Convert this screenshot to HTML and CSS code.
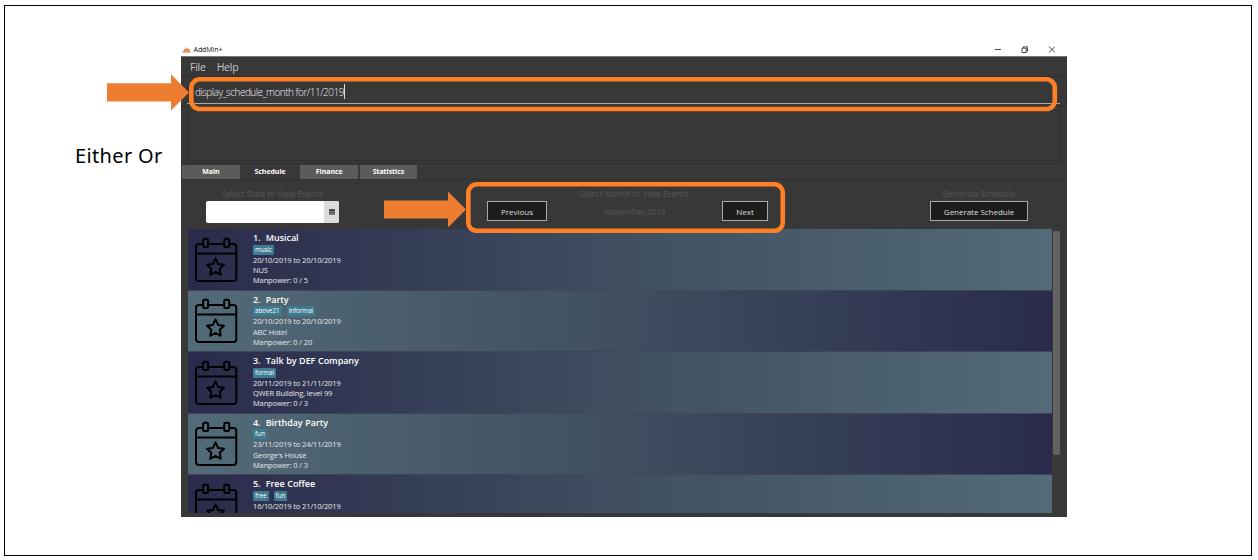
FILE: index.html
```html
<!DOCTYPE html>
<html lang="en">
<head>
<meta charset="utf-8">
<title>AddMin+</title>
<link rel="stylesheet" href="styles.css">
</head>
<body>
<svg class="defs" width="0" height="0">
  <symbol id="calendar" viewBox="0 0 44 46">
    <g fill="none" stroke="#000" stroke-width="2" stroke-linejoin="round">
      <path d="M8.500 7H5Q2 7 2 10V41Q2 44 5 44H39.300Q42.300 44 42.300 41V10Q42.300 7 39.300 7H36M15 7H29.500M2 16.600H42.300"/>
      <rect x="9.100" y="1.700" width="5" height="8.300" rx="1.500"/>
      <rect x="30.200" y="1.700" width="5" height="8.300" rx="1.500"/>
      <path d="M21.500 21.300L24.100 26.900L30 27.700L25.700 31.800L26.800 37.800L21.500 34.900L16.200 37.800L17.300 31.800L13 27.700L18.900 26.900Z"/>
    </g>
  </symbol>
</svg>
<div class="page">
  <aside class="caption"><span>Either Or</span></aside>
  <main class="window">
    <header class="titlebar">
      <svg class="logo" width="9" height="8" viewBox="0 0 9 8"><path d="M1 5.500L2.500 2.500L3.500 3.500L4.500 1L6 3L7 2.500L8.500 5.500Z" fill="#ed8a50"/><path d="M.5 6H8.500" stroke="#c9713f"/></svg>
      <span class="title">AddMin+</span>
      <svg class="controls" width="60" height="9" viewBox="0 0 60 9" fill="none" stroke="#333" stroke-width=".9"><path d="M0 4.500H6M27 3.200H31.200V7.500H27ZM28.200 3V1.900H32.500V6.200H31.300M54 1.500L60 7.500M60 1.500L54 7.500"/></svg>
    </header>
    <nav class="menu"><span class="file">File</span><span class="help">Help</span></nav>
    <section class="command"><div class="field"><span class="typed">display_schedule_month for/11/2019</span><i class="caret"></i></div></section>
    <section class="result"><div class="output"></div></section>
    <nav class="tabs"><span class="tab"><b class="t1">Main</b></span><span class="tab active"><b class="t2">Schedule</b></span><span class="tab"><b class="t3">Finance</b></span><span class="tab"><b class="t4">Statistics</b></span></nav>
    <section class="tools">
      <div class="date"><label>Select Date to View Events</label>
        <div class="picker"><span class="pick"><svg width="6" height="6" viewBox="0 0 6 6"><path d="M0 .5H6V6H0Z" fill="#777"/><path d="M0 1H6" stroke="#333" stroke-width="1.500"/><path d="M0 3.500H6" stroke="#444" stroke-width=".7"/></svg></span></div></div>
      <div class="month"><label>Select Month to View Events</label>
        <div class="pager"><button class="prev">Previous</button><span class="current">November,2019</span><button class="next">Next</button></div></div>
      <div class="generate"><label>Generate Schedule</label><button class="gen">Generate Schedule</button></div>
    </section>
    <section class="list">
      <div class="events">
        <article class="event"><svg class="cal"><use href="#calendar"/></svg><div class="info"><h2>1.&nbsp; Musical</h2><div class="tags"><span>music</span></div><p>20/10/2019 to 20/10/2019</p><p>NUS</p><p>Manpower: 0 / 5</p></div></article>
        <article class="event"><svg class="cal"><use href="#calendar"/></svg><div class="info"><h2>2.&nbsp; Party</h2><div class="tags"><span>above21</span><span>informal</span></div><p>20/10/2019 to 20/10/2019</p><p>ABC Hotel</p><p>Manpower: 0 / 20</p></div></article>
        <article class="event"><svg class="cal"><use href="#calendar"/></svg><div class="info"><h2>3.&nbsp; Talk by DEF Company</h2><div class="tags"><span>formal</span></div><p>20/11/2019 to 21/11/2019</p><p>QWER Building, level 99</p><p>Manpower: 0 / 3</p></div></article>
        <article class="event"><svg class="cal"><use href="#calendar"/></svg><div class="info"><h2>4.&nbsp; Birthday Party</h2><div class="tags"><span>fun</span></div><p>23/11/2019 to 24/11/2019</p><p>George's House</p><p>Manpower: 0 / 3</p></div></article>
        <article class="event"><svg class="cal"><use href="#calendar"/></svg><div class="info"><h2>5.&nbsp; Free Coffee</h2><div class="tags"><span>free</span><span>fun</span></div><p>16/10/2019 to 21/10/2019</p></div></article>
      </div>
      <div class="scroll"></div>
    </section>
  </main>
  <svg class="marks" width="1258" height="560" viewBox="0 0 1258 560">
    <g fill="#ed7d31"><path d="M107 83.300H171V74.300L189 92.500L171 110.500V101.500H107Z"/><path d="M384 200.500H448V191.500L466 209.500L448 227.500V218.500H384Z"/></g>
    <g fill="none" stroke="#ff7f27" stroke-width="4.600"><rect x="191.300" y="79.300" width="863.500" height="29.700" rx="8.500"/><rect x="468.300" y="184.300" width="314.500" height="46.500" rx="8.500"/></g>
  </svg>
</div>
</body>
</html>
```
FILE: styles.css
```css
*, *::before { box-sizing: border-box; }
body { margin: 0; background: #fff; font-family: "Open Sans", "Noto Sans", sans-serif; }
.defs { position: absolute; }
.page { width: 1258px; height: 560px; position: relative; display: flex; overflow: hidden; padding: 42px 0 0; }
.page::before { content: ""; position: absolute; left: 4px; top: 5px; width: 1248px; height: 551px; border: 1px solid #000; }
.marks { position: absolute; left: 0; top: 0; }
.caption { width: 181px; padding: 100px 0 0 75px; font: 20px/28px "Noto Sans", sans-serif; letter-spacing: .35px; color: #000; white-space: nowrap; }
.window { width: 886px; height: 475px; background: #383838; overflow: hidden; color: #ddd; }
.titlebar { height: 14px; background: #fff; display: flex; align-items: center; padding: 1px 12px 0 1px; }
.title { font-size: 7px; line-height: 12px; color: #111; margin-left: 2.500px; letter-spacing: -.05px; }
.controls { margin-left: auto; }
.menu { height: 20px; border-top: 1px solid #777; display: flex; gap: 11px; padding-left: 9px; font-size: 10.500px; line-height: 20px; letter-spacing: -.25px; color: #c8c8c8; }
.command { height: 31px; border: 1px solid #303030; border-width: 1px 1px 1px 0; padding: 0 6px 0 6px; }
.field { height: 27px; border-bottom: 1px solid #aaa; display: flex; align-items: center; padding: 3px 0 0 8px; }
.typed { font-size: 10px; font-weight: 300; letter-spacing: -.5px; color: #f0f0f0; white-space: nowrap; }
.caret { width: 1px; height: 15px; background: #ddd; }
.result { height: 57px; padding: 3px 6px; border-bottom: 1px solid #303030; }
.output { height: 51px; border: 1px solid #303030; }
.tabs { height: 16px; display: flex; gap: 1.500px; border-bottom: 1px solid #303030; padding: 1px 0 0 1px; }
.tab { width: 57.700px; height: 14px; background: #5b5b5b; text-align: center; font-size: 7px; line-height: 14px; letter-spacing: -.05px; color: #fff; }
.tab.active { background: #383838; }
.tools { height: 49px; padding-top: 8px; display: grid; grid-template-columns: 184px 541px 161px; }
.tools label, .current { color: #505050; font-size: 8px; font-weight: 600; line-height: 12px; }
.tools label { display: block; text-align: center; }
.date label { padding-right: 1px; }
.month label { padding-right: 3px; }
.picker { width: 133px; height: 22px; background: #fff; border-radius: 2px; margin: 1px 0 0 25px; display: flex; justify-content: flex-end; overflow: hidden; }
.pick { width: 15px; background: #dcdcdc; display: flex; align-items: center; justify-content: center; }
.pager { display: flex; align-items: center; justify-content: space-between; width: 281px; height: 20px; margin: 1px 0 0 122px; }
.current { padding: 1px 0 0 1px; }
button { font-family: "Open Sans", sans-serif; font-size: 8px; line-height: 12px; height: 20px; padding: 1px 0 0; border: 1px solid #ddd; outline: .5px solid #aaa; outline-offset: -1px; background: #1d1d1d; color: #ddd; white-space: nowrap; letter-spacing: -.03px; }
.prev { width: 60px; }
.next { width: 46px; }
.generate label { margin-right: 15px; }
.gen { display: block; width: 98px; margin: 1px 0 0 24px; }
.list { height: 284px; padding-left: 7px; display: flex; }
.events { width: 864px; height: 284px; overflow: hidden; }
.event { height: 61.500px; display: flex; padding: 7.500px 0 0 6px; background: linear-gradient(90deg, #2a2b4c, #3f4f60 50%, #536b78); border-bottom: 1px solid #404658; overflow: hidden; }
.event:nth-child(even) { background: linear-gradient(90deg, #536b78, #3f4f60 50%, #2a2b4c); }
.cal { width: 44px; height: 46px; flex: none; }
.info { margin: -5.500px 0 0 15px; white-space: nowrap; }
.info h2 { margin: 0; font-size: 9px; line-height: 13px; font-weight: 600; color: #fff; letter-spacing: -.04px; word-spacing: .3px; }
.tags { display: flex; gap: 5px; height: 10px; margin: .5px 0 .3px; }
.tags span { background: #3e7b91; border-radius: 1px; color: #fff; font-size: 6.300px; line-height: 10px; padding: 0 2px; letter-spacing: -.05px; }
.info p { margin: 0; color: #e7e7e7; font-size: 7.500px; line-height: 10.200px; letter-spacing: -.13px; }
.scroll { width: 7px; height: 224px; background: #636363; border-radius: 2px; margin: 2px 0 0 1px; }
```
